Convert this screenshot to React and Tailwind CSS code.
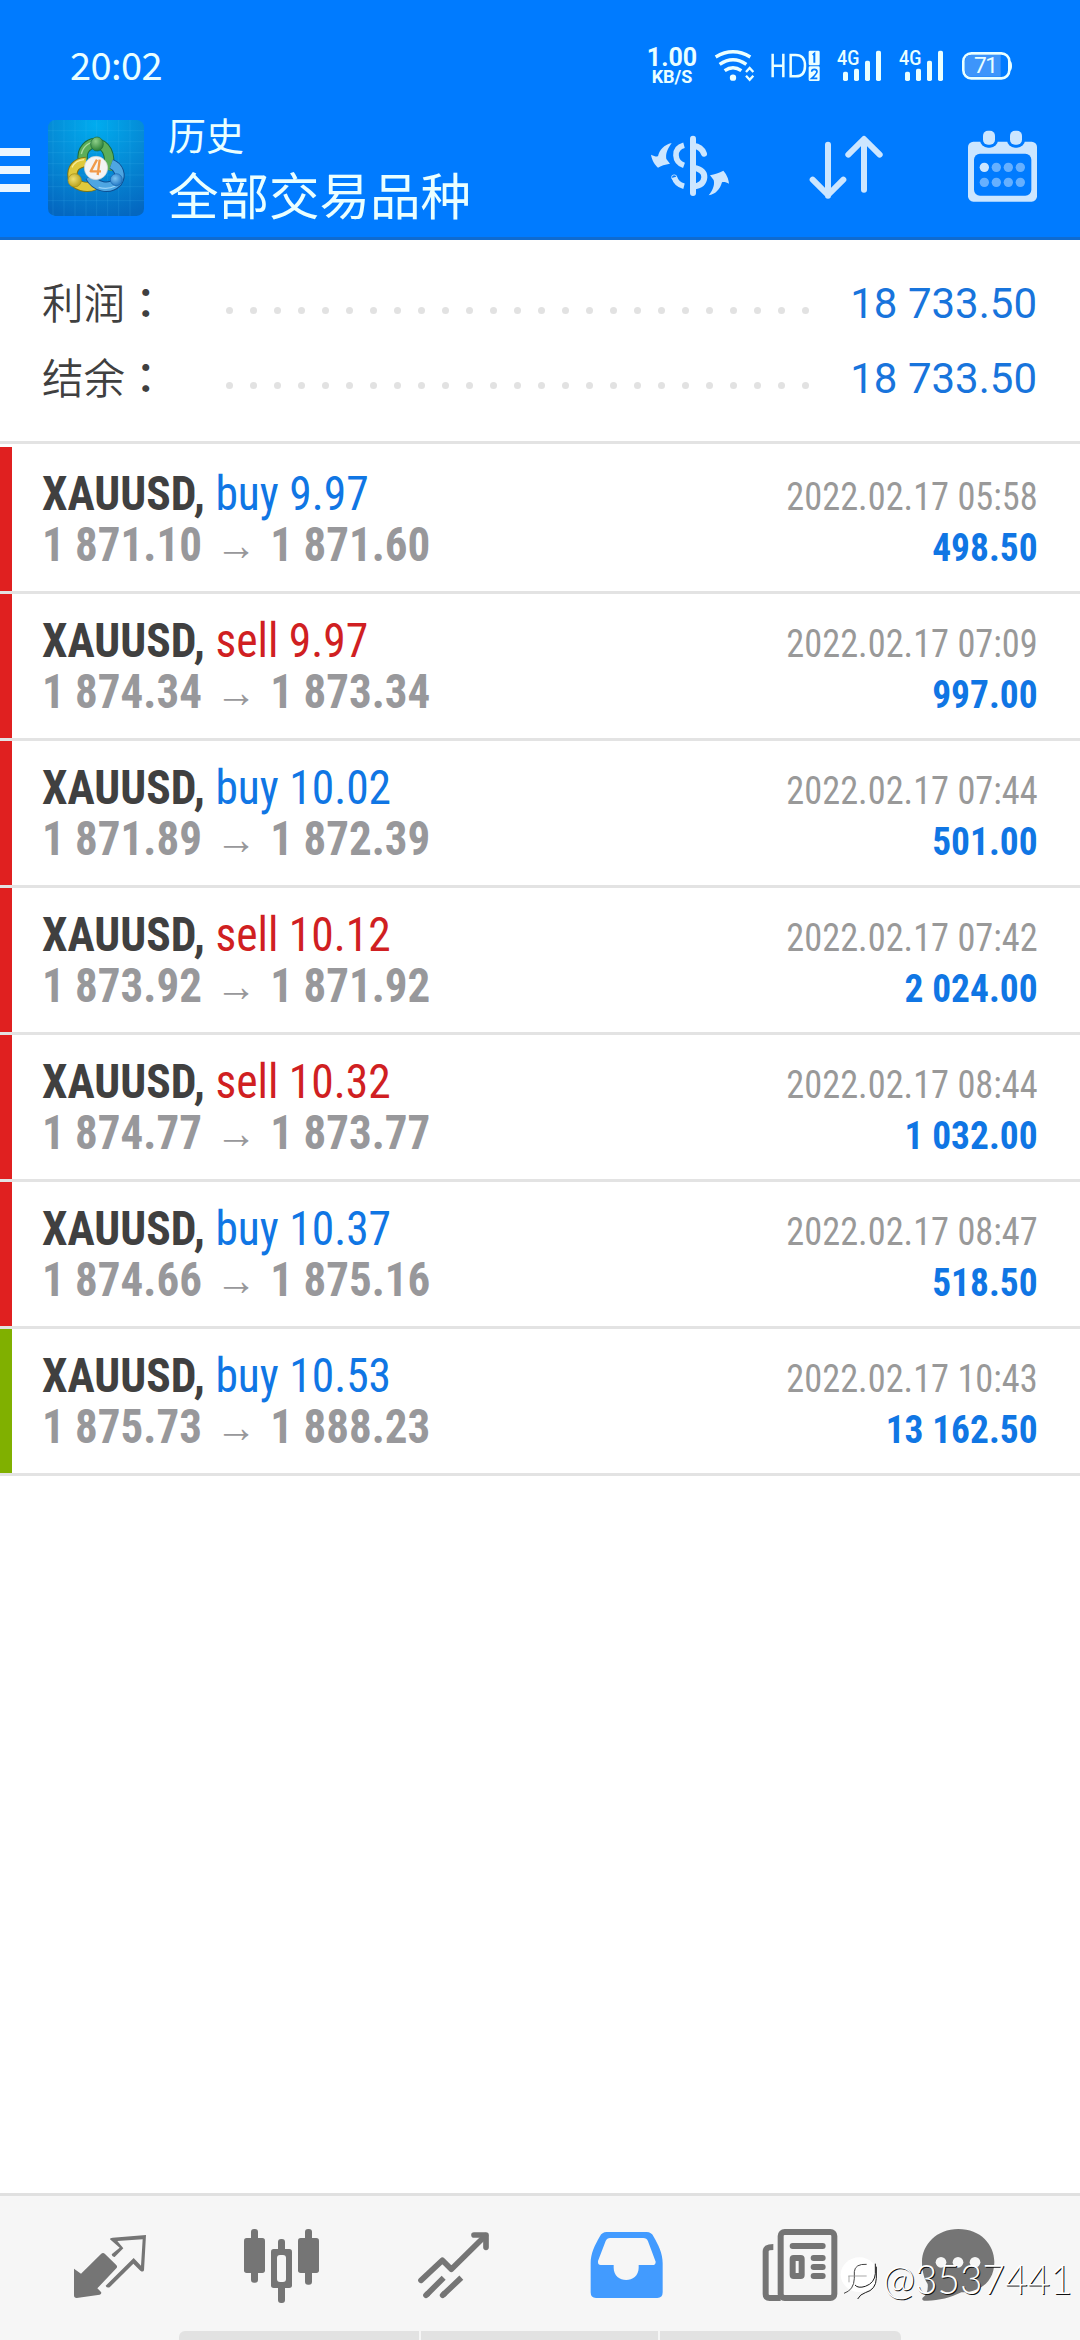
import React from 'react';

const trades = [
  { side: 'buy', lots: '9.97', from: '1 871.10', to: '1 871.60', date: '2022.02.17 05:58', profit: '498.50', bar: 'red' },
  { side: 'sell', lots: '9.97', from: '1 874.34', to: '1 873.34', date: '2022.02.17 07:09', profit: '997.00', bar: 'red' },
  { side: 'buy', lots: '10.02', from: '1 871.89', to: '1 872.39', date: '2022.02.17 07:44', profit: '501.00', bar: 'red' },
  { side: 'sell', lots: '10.12', from: '1 873.92', to: '1 871.92', date: '2022.02.17 07:42', profit: '2 024.00', bar: 'red' },
  { side: 'sell', lots: '10.32', from: '1 874.77', to: '1 873.77', date: '2022.02.17 08:44', profit: '1 032.00', bar: 'red' },
  { side: 'buy', lots: '10.37', from: '1 874.66', to: '1 875.16', date: '2022.02.17 08:47', profit: '518.50', bar: 'red' },
  { side: 'buy', lots: '10.53', from: '1 875.73', to: '1 888.23', date: '2022.02.17 10:43', profit: '13 162.50', bar: 'green' },
];

function WifiIcon() {
  return (
    <svg className="ml-[18px] h-[34px] w-[42px]" viewBox="222 28 126 102" fill="none" stroke="#eaffff" strokeWidth="10.5">
      <path d="M227 52 Q279 21 331 52" />
      <path d="M239 74 Q279 46 319 74" />
      <path d="M254 93 Q279 76 304 93" />
      <circle cx="279" cy="114" r="9.5" fill="#eaffff" stroke="none" />
      <path d="M318 97 L329 85 L340 97 M318 108 L329 120 L340 108" strokeWidth="7" />
    </svg>
  );
}

function HdIcon() {
  return (
    <svg className="ml-[14px] h-[34px] w-[52px]" viewBox="385 28 156 102">
      <path d="M393 42 V113 M425 42 V113 M393 78 H425 M447 46 H462 Q490 46 490 78 Q490 110 462 110 H447 Z" fill="none" stroke="#eaffff" strokeWidth="7.5" />
      <rect x="501" y="33" width="33" height="44" rx="4" fill="#eaffff" />
      <rect x="501" y="80" width="33" height="44" rx="4" fill="#eaffff" />
      <path d="M513 46 L518 42 V69" fill="none" stroke="#007bff" strokeWidth="6" />
      <path d="M510 96 Q510 89 518 89 Q526 89 526 96 Q526 101 510 116 H527" fill="none" stroke="#007bff" strokeWidth="5" />
    </svg>
  );
}

function SignalIcon() {
  return (
    <svg className="h-[34px] w-[46px] overflow-visible" viewBox="15 28 138 102">
      <text x="18" y="77" fontSize="61" fontWeight="500" fontFamily="Roboto, sans-serif" fill="#eaffff" textLength="67" lengthAdjust="spacingAndGlyphs">4G</text>
      <g fill="#eaffff">
        <rect x="36" y="96" width="15" height="28" rx="5" />
        <rect x="69" y="87" width="15" height="37" rx="5" />
        <rect x="102" y="63" width="15" height="61" rx="5" />
        <rect x="135" y="33" width="15" height="91" rx="5" />
      </g>
    </svg>
  );
}

function BatteryIcon() {
  return (
    <svg className="ml-[16px] h-[34px] w-[54px]" viewBox="387 28 162 102">
      <rect x="397" y="41" width="138" height="75" rx="24" fill="#007bff" stroke="#eaffff" strokeWidth="8" />
      <path d="M419 46 H509 V111 H419 Q402 111 402 92 V65 Q402 46 419 46 Z" fill="#3d95fb" />
      <path d="M537 64 Q543 66 543 79 Q543 91 537 94 Z" fill="#eaffff" />
      <text x="429" y="101" fontSize="68" fontFamily="Roboto, sans-serif" fill="#eaffff" textLength="72">71</text>
    </svg>
  );
}

function StatusBar() {
  return (
    <div className="flex h-[108px] items-start justify-between pl-[70px] pr-[66px] pt-[49px] text-[#eaffff]">
      <span className="-mt-[4px] font-['Noto_Sans_CJK_SC',sans-serif] text-[38px] leading-[38px] tracking-[-0.6px]">20:02</span>
      <div className="flex">
        <div className="-mt-[1px] flex w-[48px] flex-col items-center font-['Roboto',sans-serif] font-bold">
          <span className="text-[25px] leading-[20px]">1.00</span>
          <span className="text-[18px] leading-[17px]">KB/S</span>
        </div>
        <WifiIcon />
        <HdIcon />
        <div className="ml-[14px] flex gap-[16px]">
          <SignalIcon />
          <SignalIcon />
        </div>
        <BatteryIcon />
      </div>
    </div>
  );
}

function AppLogo() {
  return (
    <svg className="h-24 w-24 shrink-0" viewBox="24 30 288 288">
      <defs>
        <radialGradient id="sky" cx="0.5" cy="0.05" r="1">
          <stop offset="0" stopColor="#00acef" />
          <stop offset="0.5" stopColor="#058bd6" />
          <stop offset="1" stopColor="#0467c0" />
        </radialGradient>
        <radialGradient id="green" cx="0.4" cy="0.3" r="0.7">
          <stop offset="0" stopColor="#8fd08a" />
          <stop offset="1" stopColor="#2a7f35" />
        </radialGradient>
        <radialGradient id="yellow" cx="0.4" cy="0.4" r="0.7">
          <stop offset="0" stopColor="#efe070" />
          <stop offset="1" stopColor="#b39a14" />
        </radialGradient>
        <radialGradient id="blue" cx="0.4" cy="0.4" r="0.7">
          <stop offset="0" stopColor="#7cc4f2" />
          <stop offset="1" stopColor="#1a6fc0" />
        </radialGradient>
      </defs>
      <rect x="24" y="30" width="288" height="288" rx="22" fill="url(#sky)" />
      <path d="M39 30V318M72 30V318M105 30V318M138 30V318M170 30V318M203 30V318M236 30V318M270 30V318M24 62H312M24 95H312M24 128H312M24 161H312M24 195H312M24 230H312M24 272H312" stroke="#5cc8f5" strokeOpacity="0.22" strokeWidth="2" />
      <g fill="none">
        <path d="M129 152 C122 118 148 98 168 100 C196 102 216 132 204 180" stroke="#1d6b3c" strokeWidth="31" />
        <path d="M129 152 C122 118 148 98 168 100 C196 102 216 132 204 180" stroke="#5cae58" strokeWidth="25" />
        <path d="M138 156 C108 158 94 176 98 202 C104 230 140 236 164 226" stroke="#82750f" strokeWidth="31" />
        <path d="M138 156 C108 158 94 176 98 202 C104 230 140 236 164 226" stroke="#dfc93c" strokeWidth="25" />
        <path d="M150 200 C166 230 206 242 232 216 C246 196 236 170 214 162" stroke="#0f4f92" strokeWidth="31" />
        <path d="M150 200 C166 230 206 242 232 216 C246 196 236 170 214 162" stroke="#4ea6e2" strokeWidth="25" />
        <path d="M124 132 C130 106 152 94 168 96" stroke="#a9dba0" strokeWidth="4" />
        <path d="M96 172 C104 156 118 150 132 149" stroke="#f8ec9a" strokeWidth="4" />
        <path d="M176 232 C196 238 214 234 226 228" stroke="#9ad4f7" strokeWidth="4" />
      </g>
      <ellipse cx="171" cy="102" rx="19" ry="21" fill="url(#green)" stroke="#1d6b3c" strokeWidth="2" />
      <circle cx="104" cy="211" r="20" fill="url(#yellow)" stroke="#a08c18" strokeWidth="2" />
      <circle cx="229" cy="209" r="18" fill="url(#blue)" stroke="#1763ae" strokeWidth="2" />
      <circle cx="168" cy="174" r="35" fill="#f4f4f4" stroke="#c9d0ce" strokeWidth="2" />
      <path d="M171 149 L152 184 H183 M179 149 L173 195" fill="none" stroke="#f09a4a" strokeWidth="7" strokeLinejoin="round" />
    </svg>
  );
}

function CurrencyIcon() {
  return (
    <svg className="mt-[25px] h-[66px] w-[84px]" viewBox="27 280 252 198" fill="#cce6ff">
      <path d="M95 310 C79 333 77 345 79 358 L90 372 C76 374 62 378 54 384 C46 376 36 364 33 345 C42 349 47 351 54 350 C58 331 72 315 95 310 Z" />
      <path d="M206 467 C222 447 224 432 221 421 L210 407 C224 404 238 400 250 393 C258 402 266 416 267 432 C259 428 252 426 246 428 C240 450 226 464 206 467 Z" />
      <g fill="none" stroke="#cce6ff">
        <path d="M132 317 Q107 324 108 347 Q109 369 132 377" strokeWidth="17" />
        <path d="M103 413 Q109 434 132 440" strokeWidth="17" />
        <circle cx="102.500" cy="413" r="1" strokeWidth="15" />
        <path d="M160 318 Q184 320 192 342" strokeWidth="18" strokeLinecap="round" />
        <path d="M160 384 Q194 390 193 413 Q191 438 160 441" strokeWidth="18" />
        <path d="M159 297 V460" strokeWidth="18" strokeLinecap="round" />
      </g>
    </svg>
  );
}

function SortIcon() {
  return (
    <svg className="ml-[72px] mt-[25px] h-[66px] w-[78px]" viewBox="-75 280 234 198" fill="none" stroke="#cce6ff" strokeWidth="18" strokeLinecap="round" strokeLinejoin="round">
      <path d="M-6 315 V468 M-52 420 L-6 466 L40 420" />
      <path d="M102 450 V300 M55 345 L102 298 L149 345" />
    </svg>
  );
}

function CalendarIcon() {
  return (
    <svg className="ml-[84px] mt-[21px] h-[74px] w-[72px]" viewBox="411 268 216 222">
      <rect x="414" y="306" width="207" height="180" rx="16" fill="#cce6ff" />
      <rect x="432" y="342" width="172" height="126" rx="18" fill="#007bff" />
      <rect x="450" y="264" width="54" height="60" rx="24" fill="#007bff" />
      <rect x="531" y="264" width="54" height="60" rx="24" fill="#007bff" />
      <rect x="459" y="273" width="36" height="42" rx="15" fill="#cce6ff" />
      <rect x="540" y="273" width="36" height="42" rx="15" fill="#cce6ff" />
      <g fill="#66b0ff">
        <circle cx="463" cy="383" r="14" fill="#cce6ff" />
        <circle cx="499" cy="383" r="14" />
        <circle cx="535" cy="383" r="14" />
        <circle cx="571" cy="383" r="14" />
        <circle cx="463" cy="428" r="14" />
        <circle cx="499" cy="428" r="14" />
        <circle cx="535" cy="428" r="14" />
        <circle cx="571" cy="428" r="14" />
      </g>
    </svg>
  );
}

function Header() {
  return (
    <header className="h-[240px] border-b-[3px] border-[#0f6bd0] bg-[#007bff]">
      <StatusBar />
      <div className="flex h-[129px] items-start">
        <div className="mt-[40px] flex w-[30px] flex-col gap-[10px]">
          <div className="h-2 bg-[#eaf6ff]" />
          <div className="h-2 bg-[#eaf6ff]" />
          <div className="h-2 bg-[#eaf6ff]" />
        </div>
        <div className="ml-[18px] mt-3">
          <AppLogo />
        </div>
        <div className="ml-[24px] flex flex-col font-['Noto_Sans_CJK_SC',sans-serif] text-[#eaffff]">
          <span className="mt-[1px] text-[38px] leading-[50px]">历史</span>
          <span className="mt-[1px] text-[50.5px] leading-[66px]">全部交易品种</span>
        </div>
        <div className="ml-auto mr-[41px] flex items-start">
          <CurrencyIcon />
          <SortIcon />
          <CalendarIcon />
        </div>
      </div>
    </header>
  );
}

function SummaryRow({ label, value }) {
  return (
    <div className="flex h-[75px] items-center pl-[42px] pr-[43px]">
      <span className="-mt-[4px] w-[184px] whitespace-nowrap font-['Noto_Sans_CJK_SC',sans-serif] text-[41.5px] font-[350] leading-[71px] text-[#404040]">
        {label}
        <span lang="zh-TW" className="font-['Noto_Sans_CJK_TC',sans-serif] font-medium">：</span>
      </span>
      <div className="mt-[14px] flex w-[583px] justify-between">
        {Array.from({ length: 25 }, (_, i) => (
          <span key={i} className="h-[7px] w-[7px] rounded-full bg-[#e2e2e2]" />
        ))}
      </div>
      <span className="ml-auto font-['Roboto',sans-serif] text-[42px] leading-[75px] text-[#1874dc]">{value}</span>
    </div>
  );
}

function TradeRow({ trade }) {
  return (
    <div className="flex h-[147px] border-b-[3px] border-[#e3e3e3]">
      <div className={trade.bar === 'red' ? 'w-3 bg-[#e02020]' : 'w-3 bg-[#80b000]'} />
      <div className="flex flex-1 justify-between whitespace-pre pl-[30px] pr-[42px] font-['Roboto_Condensed','Roboto',sans-serif] [font-stretch:75%]">
        <div className="origin-left scale-x-[0.948] pt-[21px] text-[48px] leading-[51px]">
          <div>
            <span className="font-bold text-[#404040]">XAUUSD, </span>
            <span className={trade.side === 'buy' ? 'text-[#1076e4]' : 'text-[#d01f22]'}>{trade.side} {trade.lots}</span>
          </div>
          <div className="flex origin-left scale-x-[0.989] font-bold text-[#98989b]">
            <span>{trade.from}</span>
            <span className="w-[73px] text-center font-['Liberation_Sans',sans-serif] text-[44px] font-normal">→</span>
            <span>{trade.to}</span>
          </div>
        </div>
        <div className="pt-[25px] text-right text-[39px] leading-[51px]">
          <div className="origin-right scale-x-[0.932] text-[#999999]">{trade.date}</div>
          <div className="origin-right scale-x-[0.96] font-bold text-[#1076e4]">{trade.profit}</div>
        </div>
      </div>
    </div>
  );
}

const navIcons = [
  <svg key="quotes" className="h-[135px] w-[173px]" viewBox="72 48 519 405" fill="#757575">
    <path d="M222 266 L243 281 L303 222 Q309 216 315 222 L348 254 Q354 260 349 265 L292 325 L303 336 Q306 342 299 344 L230 354 Q222 354 222 346 Z" />
    <path d="M335 223 L359 203 L330 178 Q329 174 338 173 L438 165 L432 271 Q429 278 421 272 L400 251 L329 322 Q320 325 317 317 L401 234 L423 257 L428 178 L352 183 L370 205 L344 231 Q336 232 335 223 Z" />
  </svg>,
  <svg key="chart" className="h-[135px] w-[173px]" viewBox="591 48 519 405" fill="#757575">
    <rect x="753" y="147" width="21" height="161" rx="9" />
    <rect x="732" y="174" width="63" height="105" rx="8" />
    <rect x="915" y="147" width="21" height="167" rx="9" />
    <rect x="894" y="174" width="63" height="105" rx="8" />
    <rect x="834" y="177" width="21" height="192" rx="9" />
    <rect x="813" y="207" width="63" height="117" rx="8" />
    <rect x="831" y="225" width="27" height="81" rx="9" fill="#f6f6f6" />
  </svg>,
  <svg key="trade" className="h-[135px] w-[173px]" viewBox="30 48 519 405" fill="none" stroke="#757575" strokeWidth="17" strokeLinejoin="round">
    <path d="M183 301 L247 241 L274 268 L376 167" strokeLinecap="round" />
    <path d="M342 165 H378 V202" strokeLinecap="round" />
    <path d="M200 344 L251 293 M250 344 L304 293" />
    <path d="M198 346 L202 342 M248 346 L252 342" strokeLinecap="round" />
  </svg>,
  <svg key="history" className="h-[135px] w-[173px]" viewBox="549 48 519 405" fill="#429bff">
    <path fillRule="evenodd" d="M740 156 H860 Q874 156 881 170 C895 195 908 218 908 250 V337 Q908 354 892 354 H708 Q692 354 692 337 V250 C692 218 705 195 719 170 Q726 156 740 156 Z M750 174 Q741 174 737 183 L714 243 Q713 255 722 255 H761 V263 C761 312 836 312 836 263 V255 H878 Q887 255 887 245 L864 184 Q860 174 850 174 Z" />
  </svg>,
  <svg key="news" className="h-[135px] w-[173px]" viewBox="-12 48 519 405" fill="none" stroke="#757575">
    <path d="M182 354 H149 Q137 354 137 342 V214 Q137 201 160 201" strokeWidth="18" />
    <rect x="182" y="156" width="161" height="198" rx="12" strokeWidth="18" />
    <path d="M218 198 H308 M281 234 H308 M281 261 H308 M281 288 H308" strokeWidth="18" strokeLinecap="round" />
    <rect x="218" y="234" width="27" height="54" rx="3" strokeWidth="18" />
  </svg>,
  <svg key="messages" className="h-[135px] w-[173px]" viewBox="507 48 519 405">
    <path d="M715 147 C782 147 823 194 823 246 C823 305 780 337 724 337 C690 354 650 364 612 362 Q604 360 608 353 C620 345 625 330 623 312 C611 295 606 270 606 246 C606 194 650 147 715 147 Z" fill="#757575" />
    <g fill="#f6f6f6">
      <circle cx="663" cy="247" r="16" />
      <circle cx="714" cy="247" r="16" />
      <circle cx="765" cy="247" r="16" />
    </g>
  </svg>,
];

function Watermark() {
  return (
    <div className="absolute left-[840px] top-[58px] flex h-[50px] items-center whitespace-nowrap">
      <svg className="h-[48px] w-[40px]" viewBox="360 240 120 144">
        <ellipse cx="418" cy="299" rx="56" ry="52" fill="#ffffff" />
        <path d="M405 330 Q414 341 436 334 Q464 324 466 296 V266 M413 372 Q420 358 436 353 Q468 344 469 310 V275" fill="none" stroke="#1a1a1a" strokeWidth="3" />
        <path d="M372 355 Q402 345 403 310 V290 Q405 266 440 268" fill="none" stroke="#444444" strokeWidth="3" />
        <path d="M385 303 H440 M387 303 V322" fill="none" stroke="#999999" strokeWidth="2.5" />
      </svg>
      <span className="ml-[3px] w-[190px] origin-left scale-x-[0.945] font-['Lato',sans-serif] text-[41px] font-light leading-[50px] text-white [text-shadow:1px_1px_0_#111]">@3537441</span>
    </div>
  );
}

function BottomNav() {
  return (
    <nav className="relative mt-auto flex h-[147px] flex-col border-t-[3px] border-[#e0e0e0] bg-[#f6f6f6]">
      <div className="flex h-[135px] pl-6">{navIcons}</div>
      <div className="ml-[179px] flex h-[9px] w-[722px] gap-[2px] overflow-hidden rounded-t-[6px]">
        <div className="w-[240px] bg-[#e2e2e2]" />
        <div className="w-[237px] bg-[#e2e2e2]" />
        <div className="flex-1 bg-[#e2e2e2]" />
      </div>
      <Watermark />
    </nav>
  );
}

export default function App() {
  return (
    <div className="flex h-[2340px] w-[1080px] flex-col overflow-hidden bg-white">
      <Header />
      <section className="h-[204px] border-b-[3px] border-[#e3e3e3] pt-[26px]">
        <SummaryRow label="利润" value="18 733.50" />
        <SummaryRow label="结余" value="18 733.50" />
      </section>
      <main className="pt-[3px]">
        {trades.map((trade) => (
          <TradeRow key={trade.date} trade={trade} />
        ))}
      </main>
      <BottomNav />
    </div>
  );
}
